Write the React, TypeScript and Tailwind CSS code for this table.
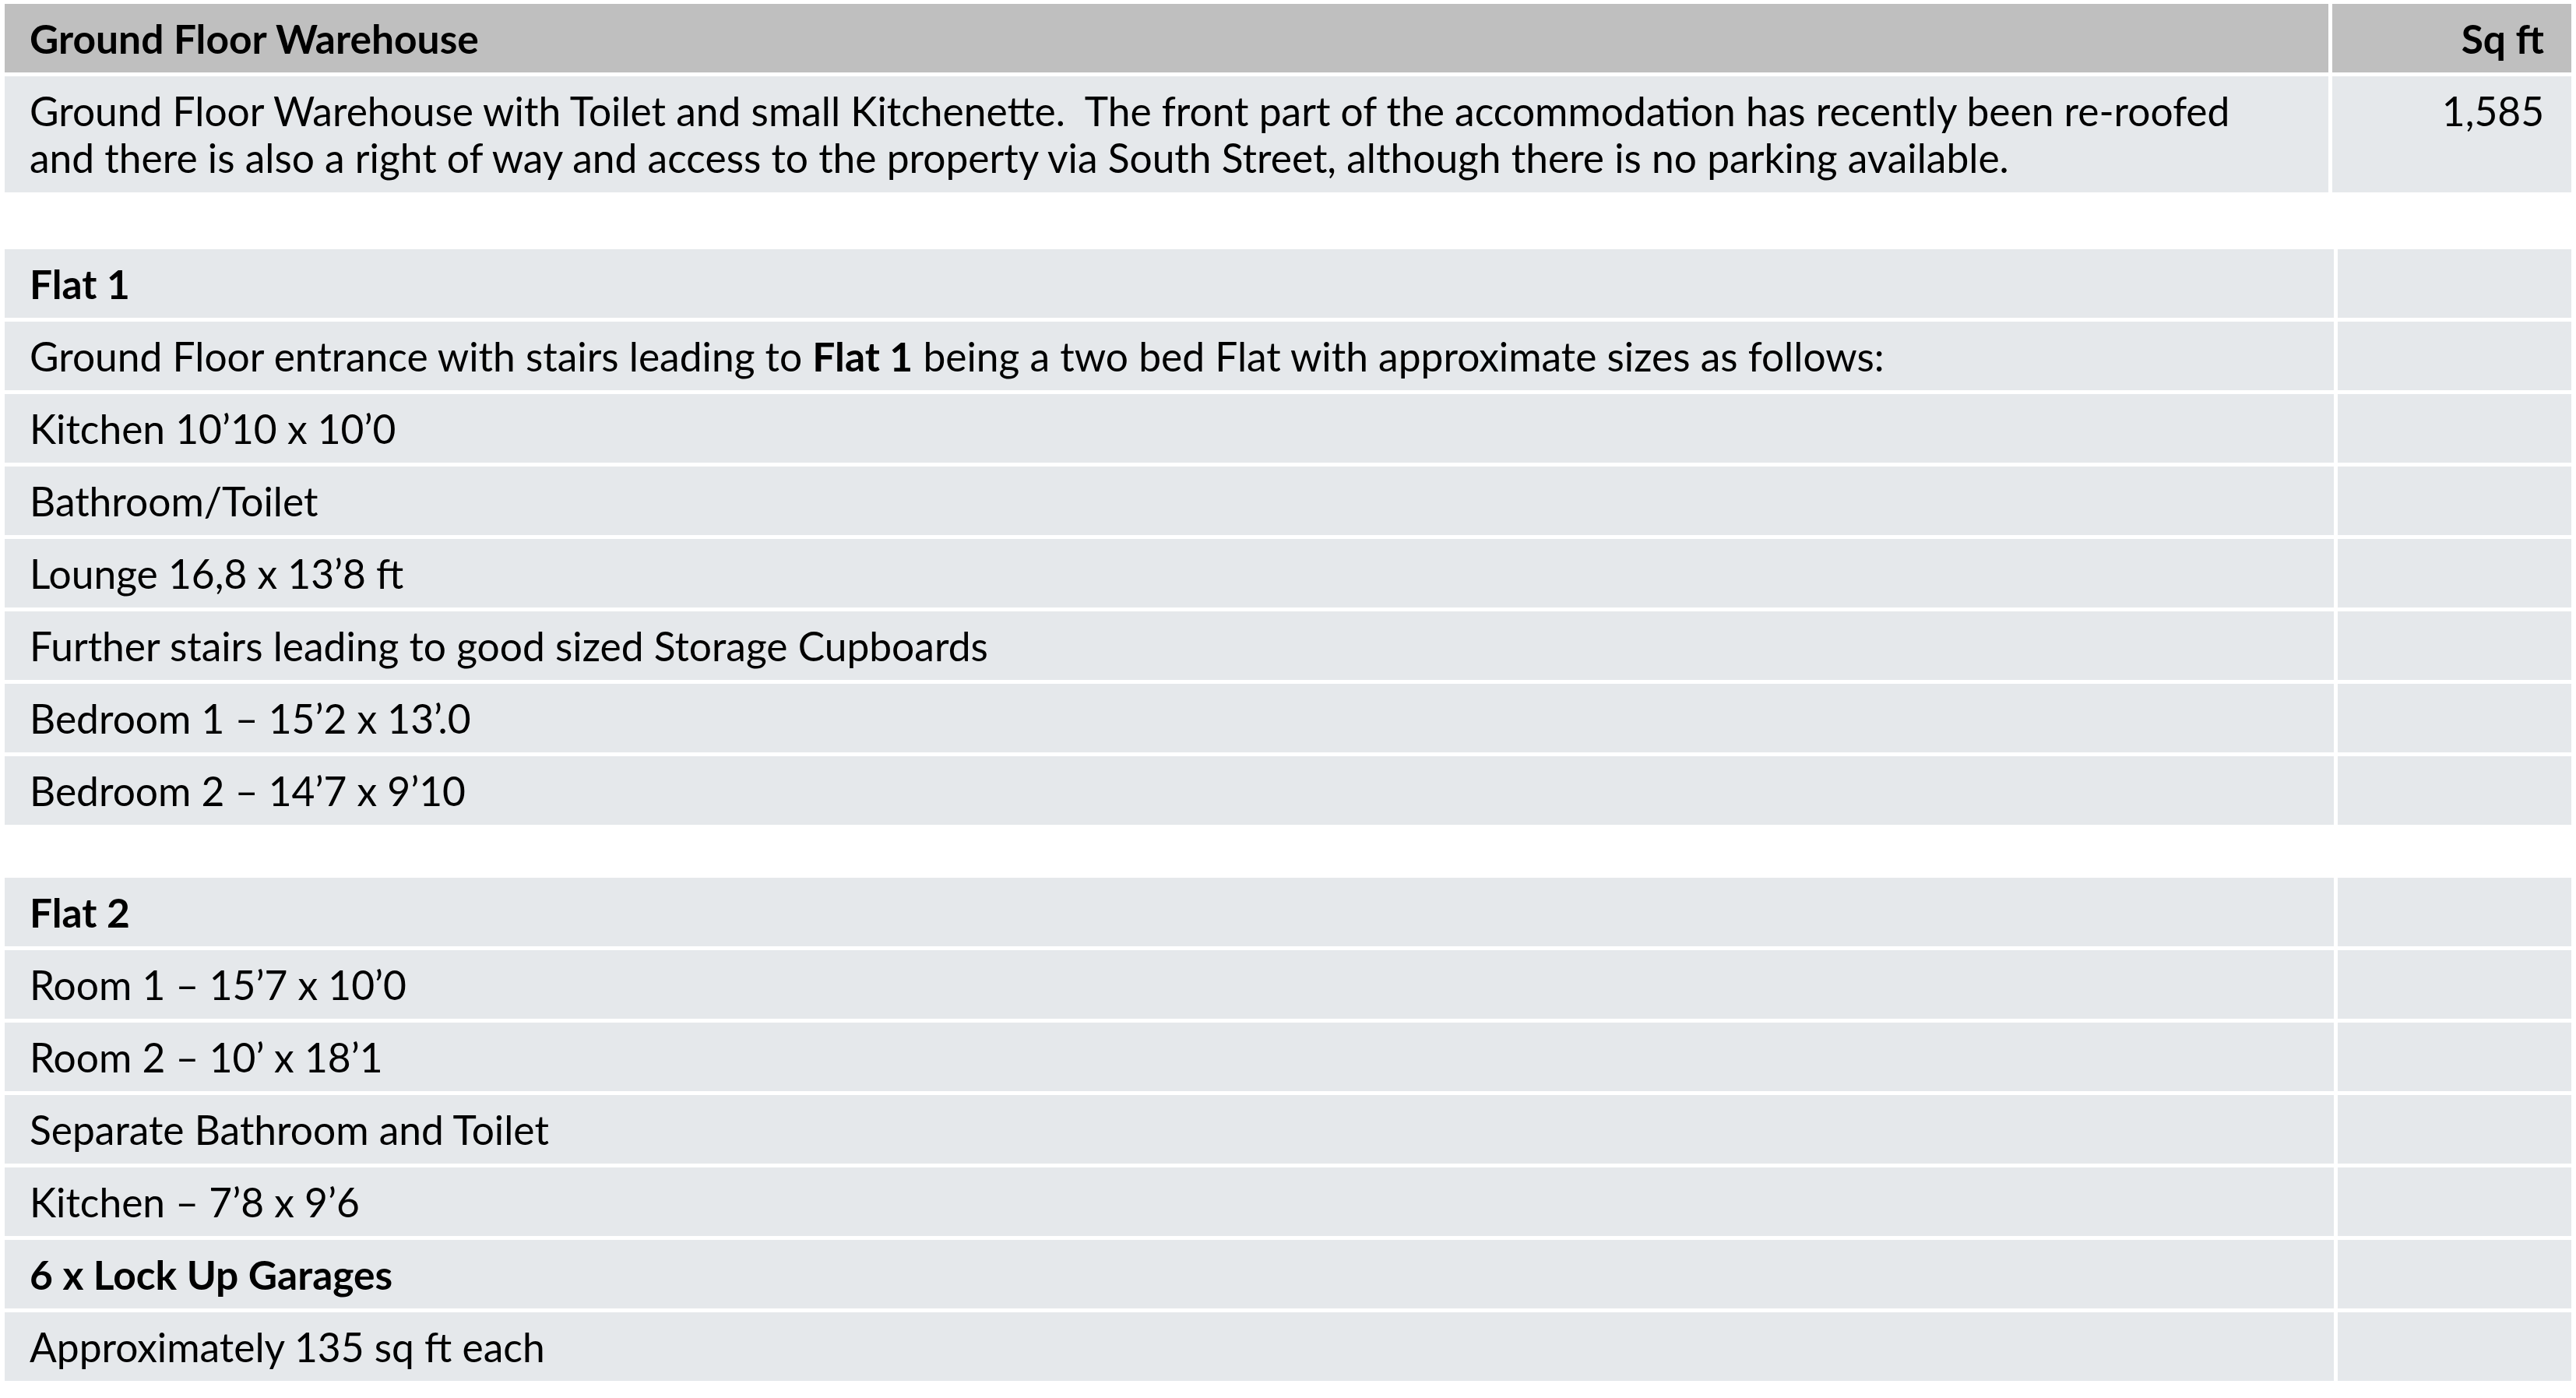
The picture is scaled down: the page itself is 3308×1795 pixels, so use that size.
import React from "react";

type Row = { label: React.ReactNode; bold?: boolean };

const flat1: Row[] = [
  { label: "Flat 1", bold: true },
  {
    label: (
      <>
        Ground Floor entrance with stairs leading to <span className="font-bold">Flat 1</span> being a two bed Flat
        with approximate sizes as follows:
      </>
    ),
  },
  { label: "Kitchen 10’10 x 10’0" },
  { label: "Bathroom/Toilet" },
  { label: "Lounge 16,8 x 13’8 ft" },
  { label: "Further stairs leading to good sized Storage Cupboards" },
  { label: "Bedroom 1 – 15’2 x 13’.0" },
  { label: "Bedroom 2 – 14’7 x 9’10" },
];

const flat2: Row[] = [
  { label: "Flat 2", bold: true },
  { label: "Room 1 – 15’7 x 10’0" },
  { label: "Room 2 – 10’ x 18’1" },
  { label: "Separate Bathroom and Toilet" },
  { label: "Kitchen – 7’8 x 9’6" },
  { label: "6 x Lock Up Garages", bold: true },
  { label: "Approximately 135 sq ft each" },
];

function SizeTable({ rows }: { rows: Row[] }) {
  return (
    <div className="flex flex-col gap-[5px]">
      {rows.map((row, i) => (
        <div key={i} className="flex h-[88px] gap-[5px]">
          <div
            className={`flex-1 flex items-center bg-[#e5e8eb] pl-[32px] whitespace-nowrap ${
              row.bold ? "font-bold" : ""
            }`}
          >
            <span>{row.label}</span>
          </div>
          <div className="w-[300px] bg-[#e5e8eb]" />
        </div>
      ))}
    </div>
  );
}

export default function App() {
  return (
    <div className="w-[3308px] h-[1795px] bg-white pt-[5px] pl-[6px] font-['Lato',sans-serif] text-[51.5px] leading-[60px] text-black">
      <div className="w-[3296px]">
        {/* Warehouse */}
        <div className="flex flex-col gap-[5px]">
          <div className="flex h-[88px] gap-[5px] font-bold">
            <div className="flex-1 flex items-center bg-[#bfbfbf] pl-[32px]">Ground Floor Warehouse</div>
            <div className="w-[307px] flex items-center justify-end bg-[#bfbfbf] pr-[35px]">Sq ft</div>
          </div>
          <div className="flex h-[149px] gap-[5px]">
            <div className="flex-1 bg-[#e5e8eb] pl-[32px] pt-[14px] whitespace-nowrap">
              Ground Floor Warehouse with Toilet and small Kitchenette.{"\u00a0"} The front part of the accommodation
              has recently been re-roofed
              <br />
              and there is also a right of way and access to the property via South Street, although there is no
              parking available.
            </div>
            <div className="w-[307px] bg-[#e5e8eb] pt-[14px] pr-[35px] text-right">1,585</div>
          </div>
        </div>

        {/* Flat 1 */}
        <div className="mt-[73px]">
          <SizeTable rows={flat1} />
        </div>

        {/* Flat 2 + garages */}
        <div className="mt-[68px]">
          <SizeTable rows={flat2} />
        </div>
      </div>
    </div>
  );
}
